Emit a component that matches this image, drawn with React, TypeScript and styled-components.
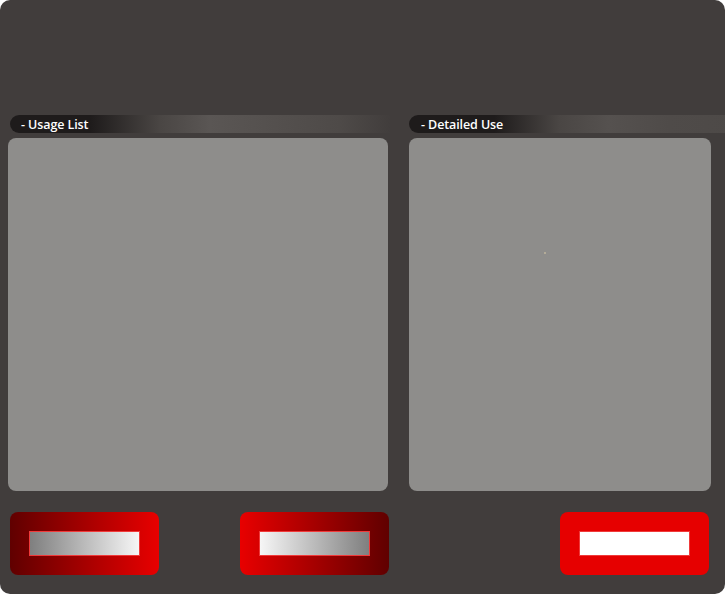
import React from "react";
import styled, { createGlobalStyle } from "styled-components";

const Global = createGlobalStyle`
  html, body { margin: 0; padding: 0; background: #ffffff; }
  body { font-family: "Open Sans", "Liberation Sans", sans-serif; }
`;

const Frame = styled.div`
  width: 725px;
  height: 594px;
  box-sizing: border-box;
  background: #413d3c;
  border-radius: 10px;
  overflow: hidden;
  padding: 115px 0 0 8px;
  display: grid;
  grid-template-columns: 380px 302px;
  grid-template-rows: 18px 358px 84px;
  column-gap: 21px;
  row-gap: 0;
`;

const SectionHeader = styled.div<{ $wide?: boolean }>`
  grid-row: 1;
  height: 18px;
  margin-left: ${(p) => (p.$wide ? "0" : "2px")};
  margin-right: ${(p) => (p.$wide ? "-20px" : "-2px")};
  border-radius: 9px 0 0 9px;
  display: flex;
  align-items: center;
  padding-left: ${(p) => (p.$wide ? "12px" : "11px")};
  color: #ffffff;
  font-size: 12.5px;
  font-weight: 600;
  letter-spacing: -0.1px;
  background: ${(p) =>
    p.$wide
      ? "linear-gradient(to right, #1e1b1b 0px, #1e1b1b 85px, #4a4644 150px, #55514f 200px, #4f4b49 260px, #4d4947 336px)"
      : "linear-gradient(to right, #1e1b1b 0px, #1e1b1b 80px, #4a4644 150px, #5a5654 200px, #4e4a48 330px, #413d3c 382px)"};
`;

const Panel = styled.div`
  grid-row: 2;
  margin-top: 5px;
  background: #8e8d8b;
  border-radius: 8px;
  position: relative;
`;

const Dot = styled.span`
  position: absolute;
  left: 135px;
  top: 114px;
  width: 2px;
  height: 2px;
  background: #b3ab98;
`;

const ButtonRow = styled.div<{ $end?: boolean }>`
  grid-row: 3;
  margin-top: 21px;
  height: 63px;
  display: flex;
  justify-content: ${(p) => (p.$end ? "flex-end" : "space-between")};
  padding-left: ${(p) => (p.$end ? "0" : "2px")};
  margin-right: ${(p) => (p.$end ? "2px" : "-1px")};
`;

type Variant = "dark-left" | "dark-right" | "solid";

const Button = styled.button<{ $variant: Variant }>`
  width: 149px;
  height: 63px;
  border: none;
  border-radius: 8px;
  padding: 0;
  display: flex;
  align-items: center;
  justify-content: center;
  cursor: pointer;
  background: ${(p) =>
    p.$variant === "dark-left"
      ? "linear-gradient(to right, #600000, #b30000 60%, #e80000)"
      : p.$variant === "dark-right"
      ? "linear-gradient(to right, #e80000, #b30000 40%, #600000)"
      : "#e60000"};
`;

const ButtonFace = styled.span<{ $variant: Variant }>`
  width: 111px;
  height: 25px;
  box-sizing: border-box;
  border: 1px solid #f03a3a;
  background: ${(p) =>
    p.$variant === "dark-left"
      ? "linear-gradient(to right, #7f7f7f, #f6f6f6)"
      : p.$variant === "dark-right"
      ? "linear-gradient(to right, #f6f6f6, #7f7f7f)"
      : "#ffffff"};
`;

const ActionButton = ({ variant }: { variant: Variant }) => (
  <Button $variant={variant}>
    <ButtonFace $variant={variant} />
  </Button>
);

export default function App() {
  return (
    <>
      <Global />
      <Frame>
        <SectionHeader>- Usage List</SectionHeader>
        <SectionHeader $wide>- Detailed Use</SectionHeader>
        <Panel />
        <Panel>
          <Dot />
        </Panel>
        <ButtonRow>
          <ActionButton variant="dark-left" />
          <ActionButton variant="dark-right" />
        </ButtonRow>
        <ButtonRow $end>
          <ActionButton variant="solid" />
        </ButtonRow>
      </Frame>
    </>
  );
}
